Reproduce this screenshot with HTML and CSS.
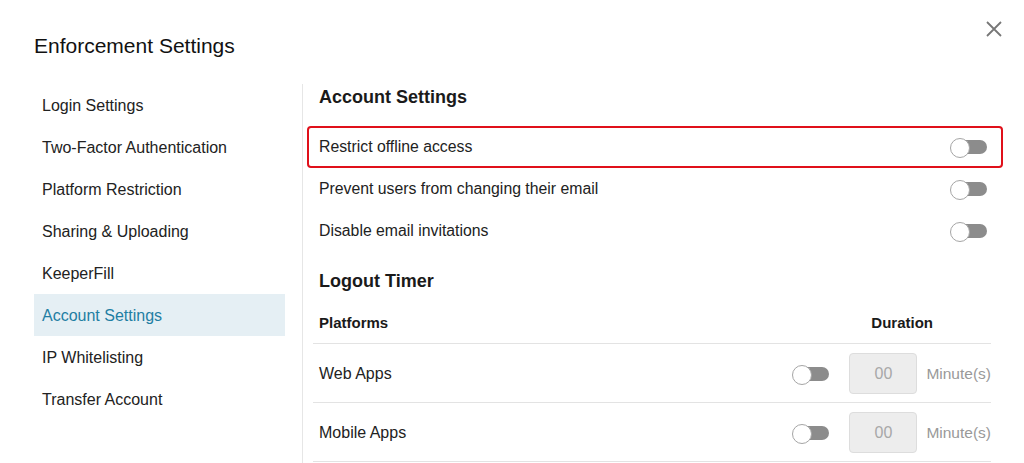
FILE: index.html
```html
<!DOCTYPE html>
<html lang="en">
<head>
  <meta charset="UTF-8" />
  <meta name="viewport" content="width=device-width, initial-scale=1.0"/>
  <title>Enforcement Settings</title>
  <link rel="stylesheet" href="styles.css">
</head>
<body>
  <div class="modal">
    <div class="modal-header">
      <h1>Enforcement Settings</h1>
      <button class="close" aria-label="Close">
        <svg width="16" height="16" viewBox="0 0 16 16">
          <path d="M1 1 L15 15 M15 1 L1 15" stroke="#777" stroke-width="1.8" fill="none"/>
        </svg>
      </button>
    </div>

    <div class="modal-body">
      <ul class="nav">
        <li>Login Settings</li>
        <li>Two-Factor Authentication</li>
        <li>Platform Restriction</li>
        <li>Sharing &amp; Uploading</li>
        <li>KeeperFill</li>
        <li class="active">Account Settings</li>
        <li>IP Whitelisting</li>
        <li>Transfer Account</li>
      </ul>

      <div class="content">
        <h2>Account Settings</h2>
        <div class="setting highlight">
          <span>Restrict offline access</span>
          <span class="toggle"></span>
        </div>
        <div class="setting">
          <span>Prevent users from changing their email</span>
          <span class="toggle"></span>
        </div>
        <div class="setting">
          <span>Disable email invitations</span>
          <span class="toggle"></span>
        </div>

        <h2 class="timer-title">Logout Timer</h2>
        <div class="timer">
          <div class="timer-head">
            <span>Platforms</span>
            <span class="duration">Duration</span>
          </div>
          <div class="timer-row">
            <span class="platform">Web Apps</span>
            <span class="toggle"></span>
            <input class="minutes" type="text" value="00" disabled>
            <span class="unit">Minute(s)</span>
          </div>
          <div class="timer-row">
            <span class="platform">Mobile Apps</span>
            <span class="toggle"></span>
            <input class="minutes" type="text" value="00" disabled>
            <span class="unit">Minute(s)</span>
          </div>
        </div>
      </div>
    </div>
  </div>
</body>
</html>
```

FILE: styles.css
```css
* {
  margin: 0;
  padding: 0;
  box-sizing: border-box;
  font-family: 'Liberation Sans', Arial, sans-serif;
}

body {
  background: #fff;
  color: #222;
  height: 463px;
  overflow: hidden;
}

.modal {
  padding: 0 21px 0 34px;
}

.modal-header {
  display: flex;
  justify-content: space-between;
  align-items: flex-start;
  padding-top: 21px;
}

h1 {
  margin-top: 13px;
  font-size: 21px;
  line-height: 24px;
  font-weight: normal;
  color: #111;
}

.close {
  background: none;
  border: none;
  width: 16px;
  height: 16px;
  margin-right: 1px;
  cursor: pointer;
}

.close svg {
  display: block;
}

.modal-body {
  display: grid;
  grid-template-columns: 251px 1fr;
  margin-top: 26px;
}

.nav {
  list-style: none;
}

.nav li {
  height: 42px;
  line-height: 44px;
  padding-left: 8px;
  font-size: 16px;
  color: #222;
}

.nav li.active {
  background: #e5eff4;
  color: #1f7ea3;
}

.content {
  margin-left: 17px;
  padding-left: 4px;
  border-left: 1px solid #e6e6e6;
  height: 400px;
}

h2 {
  font-size: 18px;
  line-height: 26px;
  font-weight: bold;
  color: #1a1a1a;
  padding-left: 12px;
  margin-bottom: 16px;
}

.timer-title {
  margin-top: 16px;
  margin-bottom: 0;
}

.setting {
  height: 42px;
  display: flex;
  align-items: center;
  justify-content: space-between;
  padding: 0 14px 1px 10px;
  border: 2px solid transparent;
  border-radius: 4px;
  font-size: 15.8px;
}

.setting.highlight {
  border-color: #e0101a;
}

.toggle {
  position: relative;
  display: inline-block;
  width: 35px;
  height: 14px;
  margin-left: 2px;
  border-radius: 7px;
  background: #8c8c8c;
}

.toggle::before {
  content: "";
  position: absolute;
  left: -2px;
  top: -2px;
  width: 18px;
  height: 18px;
  border-radius: 50%;
  background: #fff;
  border: 1px solid #a5a5a5;
}

.timer {
  margin: 0 12px 0 6px;
  font-size: 16px;
}

.timer-head {
  display: flex;
  justify-content: space-between;
  padding: 20px 58px 11px 6px;
  line-height: 18px;
  font-size: 15px;
  font-weight: bold;
  color: #1a1a1a;
  border-bottom: 1px solid #e3e3e3;
}

.timer-row {
  display: flex;
  align-items: center;
  height: 59px;
  padding: 1px 0 0 6px;
  border-bottom: 1px solid #e3e3e3;
}

.platform {
  flex: 1;
}

.minutes {
  width: 68px;
  height: 41px;
  margin-left: 20px;
  border: 1px solid #dddddd;
  border-radius: 4px;
  background: #ededed;
  color: #a8a8a8;
  font-size: 16px;
  text-align: center;
}

.unit {
  margin-left: 9px;
  font-size: 15.5px;
  color: #999;
}
```
